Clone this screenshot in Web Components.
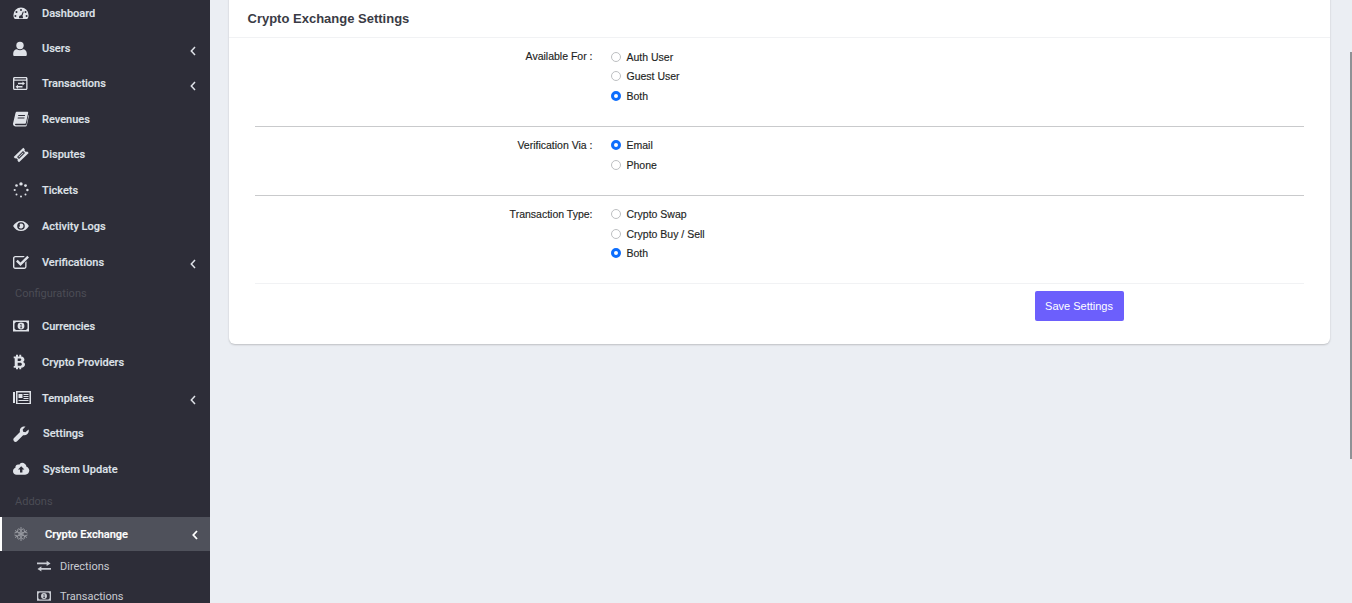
<!DOCTYPE html>
<html>
<head>
<meta charset="utf-8">
<title>Crypto Exchange Settings</title>
<style>
  html, body { margin: 0; height: 100%; overflow: hidden; background: #ebeef3; }
  body { font-family: "Liberation Sans", Arial, sans-serif; }
</style>
</head>
<body>
<admin-shell>
  <admin-sidebar slot="side"></admin-sidebar>
  <settings-card>
    <setting-group label="Available For :" options="Auth User|Guest User|Both" checked="2"></setting-group>
    <setting-group label="Verification Via :" options="Email|Phone" checked="0"></setting-group>
    <setting-group label="Transaction Type:" options="Crypto Swap|Crypto Buy / Sell|Both" checked="2"></setting-group>
  </settings-card>
</admin-shell>

<script>
const ICONS = {
  dashboard: '<path fill-rule="evenodd" d="M8 1.5A7.6 7.6 0 0 0 .4 9.2c0 1.3.3 2.400 .9 3.400.2.300.5.400.8.400h11.800c.3 0 .6-.1.8-.4.6-1 .9-2.100.9-3.400A7.600 7.600 0 0 0 8 1.500zM8 3a1 1 0 1 1 0 2 1 1 0 0 1 0-2zM3.500 5a1 1 0 1 1 0 2 1 1 0 0 1 0-2zm9 0a1 1 0 1 1 0 2 1 1 0 0 1 0-2zM2.400 9a1 1 0 1 1 0 2 1 1 0 0 1 0-2zm11.200 0a1 1 0 1 1 0 2 1 1 0 0 1 0-2zM9.900 5.400l.9.300-1.400 4.400c.4.300.6.800.6 1.200 0 .3-.1.600-.2.900H6.200a2 2 0 0 1-.2-.9c0-1.100.9-2 2-2h.3z"/>',
  user: '<circle cx="7" cy="4.500" r="3.700"/><path d="M1.500 15c-.8 0-1.300-.5-1.300-1.300v-1.200c0-2.500 1.800-4.300 3.700-4.300 1 .7 2 1.100 3.100 1.100s2.100-.4 3.100-1.100c1.900 0 3.700 1.800 3.700 4.300v1.200c0 .8-.5 1.300-1.300 1.300z"/>',
  exchange: '<path fill-rule="evenodd" d="M1.500 1h11.500c.8 0 1.500.7 1.500 1.500v10c0 .8-.7 1.500-1.500 1.500H1.500C.7 14 0 13.300 0 12.500v-10C0 1.700.7 1 1.500 1zM1.300 4.700v7.800c0 .1.100.2.200.2h11.500c.1 0 .2-.1.200-.2V4.700zM1.500 2.300v1.200h11.500V2.300zM9.500 5.500l2.500 2-2.500 2V8.200H5V6.800h4.500zM5 8.800v1.300h4.500v1.400H5v1.200l-2.500-2z"/>',
  book: '<path fill-rule="evenodd" d="M4 .8h10.500c.5 0 .8.400.7.900l-2.300 10.300c-.1.400-.4.700-.8.700H3c-.7 0-1 .4-1 .8s.4.800 1 .8h9.800c.3 0 .5-.2.600-.4L15.500 4l.5.500-2.200 9.900c-.2.700-.7 1.100-1.400 1.100H2.700C1.300 15.500 0 14.500 0 13c0-.2 0-.5.100-.7L2.500 2C2.700 1.300 3.300.8 4 .8zM5.300 4l-.2 1h6.800l.2-1zM4.800 6.500l-.2 1h6.800l.2-1z"/>',
  ticket: '<path fill-rule="evenodd" d="M10.300 .7l1.500 1.500c-.4.800-.2 1.600.3 2.100s1.300.7 2.100.3l1.500 1.500L6 15.300l-1.500-1.500c.4-.8.2-1.600-.3-2.100s-1.300-.7-2.100-.3L.7 10zM10 4 4 10l2 2 6-6z"/><path d="M10 5.400 5.400 10 6 10.600 10.600 6z"/>',
  spinner: '<circle cx="8" cy="1.900" r="1.700"/><circle cx="12.500" cy="3.600" r="1.400"/><circle cx="14.400" cy="8" r="1.200"/><circle cx="12.500" cy="12.500" r="1"/><circle cx="8" cy="14.400" r="1"/><circle cx="3.500" cy="12.500" r="1"/><circle cx="1.700" cy="8" r="1.100"/><circle cx="3.500" cy="3.500" r="1.300"/>',
  eye: '<path fill-rule="evenodd" d="M8 3c3.300 0 6.300 2 7.900 5-1.600 3-4.600 5-7.900 5S1.700 11 .100 8C1.700 5 4.700 3 8 3zM8 4.200a3.800 3.800 0 1 0 0 7.600 3.800 3.800 0 0 0 0-7.600zm0 1.300a2.500 2.500 0 1 1-2.400 3.200c.7.300 1.800-.4 1.200-1.500-.3-.5-.3-1.500 1.200-1.700z"/>',
  check: '<path fill-rule="evenodd" d="M2.300 2h9.500l-1.300 1.300H2.300c-.5 0-.9.400-.9.900v8.500c0 .5.400.9.900.9h9c.5 0 .9-.4.900-.9V8.500l1.300-1.300v5.500c0 1.200-1 2.200-2.200 2.200h-9C1 14.900 0 13.900 0 12.700V4.200C0 3 1 2 2.300 2z"/><path d="M14.300 1.800 16 3.500 7.500 12 3 7.500l1.700-1.700 2.800 2.800z"/>',
  money: '<path fill-rule="evenodd" d="M0 2.500h16v11H0zM3 4 1.500 5.500v5L3 12h10l1.500-1.500v-5L13 4z"/><path fill-rule="evenodd" d="M8 4.600a3.400 3.400 0 1 1 0 6.800 3.400 3.400 0 0 1 0-6.800zM7.200 6v.7h.5v2.800h-.6v.7h2v-.7h-.6V6z"/>',
  bitcoin: '<path fill-rule="evenodd" d="M3 .8h2v1.700h1.300V.8h1.900v1.800c2 .3 3.200 1.400 3.200 3 0 1.100-.5 1.900-1.400 2.300 1.300.4 2 1.300 2 2.600 0 2-1.500 3.100-3.800 3.200v1.500H6.300v-1.500H5v1.500H3v-1.500H.7v-1.800h1V4.300h-1V2.500H3zM4.700 4.400v2.500h2.100c.9 0 1.500-.5 1.500-1.300s-.6-1.200-1.500-1.200zm0 4.300v3h2.500c1 0 1.700-.6 1.700-1.500s-.7-1.500-1.700-1.500z"/>',
  news: '<path fill-rule="evenodd" d="M0 2h2v11H0zM3 1h15v13H3zM4.500 2.500v3h.0v7.500h12V2.500zM5.500 4h4v4h-4zM10.500 4h5v1.100h-5zM10.500 6h5v1.100h-5zM10.500 8h5v1.100h-5zM5.500 10h10v1.100h-10z"/>',
  wrench: '<path d="M15.600 3.600c.4 1.600 0 3.300-1.200 4.500-1.200 1.100-2.800 1.500-4.300 1.100l-6 6c-.9.900-2.300.9-3.100 0-.9-.9-.9-2.300 0-3.100l6-6C6.500 4.600 6.900 2.900 8 1.800 9.200.6 10.900.200 12.500.6L9.700 3.400l.4 2.300 2.300.5z"/>',
  cloud: '<path fill-rule="evenodd" d="M9 1.800c2.300 0 4.200 1.700 4.500 3.900C15.100 6.300 16.300 7.900 16.300 9.600c0 2.300-1.800 4.100-4.100 4.100H3.500C1.500 13.700 0 12.200 0 10.200 0 8.600 1 7.200 2.500 6.800c-.1-.2-.1-.5-.1-.7 0-1.500 1.200-2.700 2.700-2.700.4 0 .8.100 1.100.3C7 2.600 7.900 1.800 9 1.800zM8.200 5.200 5 8.400h2v3.200h2.400V8.400h2z"/>',
  atom: '<g fill="none" stroke="currentColor" stroke-width=".9"><path d="M8 1v14M2 4.500l12 7M14 4.500l-12 7"/><path d="M5.500 2.500 8 4.500l2.500-2M5.500 13.500 8 11.500l2.500 2M1.500 7l3-1 .5-3M14.500 7l-3-1-.5-3M1.500 9l3 1 .5 3M14.500 9l-3 1-.5 3"/><circle cx="8" cy="8" r="2.200"/></g>',
  arrows: '<path d="M11 2v2H0v2h11v2l4.500-3zM5 8.300 .5 11.300 5 14.300v-2h11v-2H5z"/>'
};

class AdminShell extends HTMLElement {
  connectedCallback() {
    this.attachShadow({ mode: 'open' });
    this.shadowRoot.innerHTML = `
      <style>
        :host { display: flex; height: 603px; overflow: hidden; position: relative; }
        .side { flex: 0 0 210px; }
        main { flex: 1; padding: 0 22px 0 18.500px; margin-top: -14px; min-width: 0; }
        .thumb { position: absolute; right: 0; top: 52px; width: 2px; height: 407px; background: #8f9296; }
      </style>
      <div class="side"><slot name="side"></slot></div>
      <main><slot></slot></main>
      <div class="thumb"></div>
    `;
  }
}

class AdminSidebar extends HTMLElement {
  connectedCallback() {
    this.attachShadow({ mode: 'open' });
    const rows = [
      ['dashboard', 'Dashboard', 0, 35, 17, 42],
      ['user', 'Users', 1, 35, 14, 42],
      ['exchange', 'Transactions', 1, 35, 14, 42],
      ['book', 'Revenues', 0, 36, 16, 42],
      ['ticket', 'Disputes', 0, 35, 16, 42],
      ['spinner', 'Tickets', 0, 36, 16, 42],
      ['eye', 'Activity Logs', 0, 36, 16, 42],
      ['check', 'Verifications', 1, 36, 16, 42],
      ['#', 'Configurations'],
      ['money', 'Currencies', 0, 36, 17, 42],
      ['bitcoin', 'Crypto Providers', 0, 36, 13, 42],
      ['news', 'Templates', 1, 36, 18, 42],
      ['wrench', 'Settings', 0, 35, 15, 43],
      ['cloud', 'System Update', 0, 36, 17, 43],
      ['#', 'Addons']
    ];
    const html = rows.map(r => {
      if (r[0] === '#') return `<div class="label ${r[1] === 'Addons' ? 'addons' : ''}">${r[1]}</div>`;
      return `<div class="row" style="height:${r[3]}px">
        <span class="ic" style="width:${r[5] - 13}px"><svg viewBox="0 0 18 16" height="16" fill="currentColor">${ICONS[r[0]]}</svg></span>
        <span class="t">${r[1]}</span>
        ${r[2] ? '<svg class="chev" viewBox="0 0 6 10" width="6" height="10"><path d="M5 1 1.300 5 5 9" fill="none" stroke="currentColor" stroke-width="1.500"/></svg>' : ''}
      </div>`;
    }).join('');
    this.shadowRoot.innerHTML = `
      <style>
        :host { display: block; width: 210px; height: 603px; overflow: hidden; background: #2d2d38; color: #dfe2e8; font: 500 11px Roboto, sans-serif; }
        .list { margin-top: -4px; }
        .row { display: flex; align-items: center; padding-left: 13px; position: relative; }
        .ic { display: flex; align-items: center; flex: none; }
        .ic svg { display: block; }
        .t { white-space: nowrap; -webkit-text-stroke: .15px currentColor; }
        .chev { position: absolute; left: 190px; top: 50%; margin-top: -3px; }
        .label { height: 28px; line-height: 28px; padding-left: 15px; color: #4b4c55; font-weight: 400; }
        .label.addons { height: 30px; line-height: 30px; }
        .active { height: 34px; display: flex; align-items: center; background: #4f515b; border-left: 2px solid #fff; color: #fff; position: relative; box-sizing: border-box; padding-left: 11px; }
        .active .ic { width: 32px; display: flex; color: #9fa1a8; }
        .active .chev { margin-top: -4px; }
        .sub { display: flex; align-items: center; padding-left: 37px; height: 30px; color: #c9ccd3; font-weight: 400; }
        .sub svg { margin-right: 9px; }
      </style>
      <div class="list">
        ${html}
        <div class="active">
          <span class="ic"><svg viewBox="0 0 16 16" width="16" height="16" fill="currentColor">${ICONS.atom}</svg></span>
          <span class="t" style="-webkit-text-stroke:.2px #fff">Crypto Exchange</span>
          <svg class="chev" viewBox="0 0 6 10" width="6" height="10"><path d="M5 1 1.300 5 5 9" fill="none" stroke="currentColor" stroke-width="1.800"/></svg>
        </div>
        <div class="sub"><svg viewBox="0 0 16 16" width="14" height="14" fill="currentColor">${ICONS.arrows}</svg><span>Directions</span></div>
        <div class="sub"><svg viewBox="0 0 16 16" width="14" height="14" fill="currentColor">${ICONS.money}</svg><span>Transactions</span></div>
      </div>
    `;
  }
}

class SettingsCard extends HTMLElement {
  connectedCallback() {
    this.attachShadow({ mode: 'open' });
    this.shadowRoot.innerHTML = `
      <style>
        :host { display: block; background: #fff; border-radius: 6px; box-shadow: 0 1px 2px rgba(0,0,0,.2); height: 358px; box-sizing: border-box; }
        header { height: 52px; box-sizing: border-box; padding: 14px 19px 0; border-bottom: 1px solid #f1f2f4; display: flex; align-items: center; font: 700 13px "Liberation Sans", sans-serif; color: #3a3b45; }
        .body { padding: 0 26px; }
        footer { border-top: 1px solid #f1f2f4; margin: 0 26px; padding-top: 7px; display: flex; }
        button { margin-left: 780px; width: 89px; height: 30px; border: 0; border-radius: 2px; background: #6c5ffc; color: #fff; font: 400 11px "Liberation Sans", sans-serif; padding: 0; }
      </style>
      <header>Crypto Exchange Settings</header>
      <div class="body"><slot></slot></div>
      <footer><button>Save Settings</button></footer>
    `;
  }
}

class SettingGroup extends HTMLElement {
  connectedCallback() {
    this.attachShadow({ mode: 'open' });
    const opts = this.getAttribute('options').split('|');
    const on = +this.getAttribute('checked');
    this.shadowRoot.innerHTML = `
      <style>
        :host { display: block; border-bottom: 1px solid #c9cacc; padding: 9px 0 20px; color: #1e1f24; font: 400 10.500px "Liberation Sans", sans-serif; -webkit-text-stroke: .15px currentColor; }
        :host(:last-of-type) { border-bottom: 0; }
        .g { display: flex; }
        .k { width: 338px; text-align: right; line-height: 19.500px; white-space: nowrap; }
        .v { margin-left: 18px; }
        .o { display: flex; align-items: center; height: 19.500px; white-space: nowrap; }
        i { box-sizing: border-box; width: 10px; height: 10px; border-radius: 50%; border: 1px solid #bdbfc2; margin-right: 6px; background: #fff; flex: none; }
        i.on { border: 3px solid #0d6efd; }
      </style>
      <div class="g"><div class="k">${this.getAttribute('label')}</div>
      <div class="v">${opts.map((o, i) => `<div class="o"><i class="${i === on ? 'on' : ''}"></i>${o}</div>`).join('')}</div></div>
    `;
  }
}

customElements.define('admin-shell', AdminShell);
customElements.define('admin-sidebar', AdminSidebar);
customElements.define('settings-card', SettingsCard);
customElements.define('setting-group', SettingGroup);
</script>
</body>
</html>
